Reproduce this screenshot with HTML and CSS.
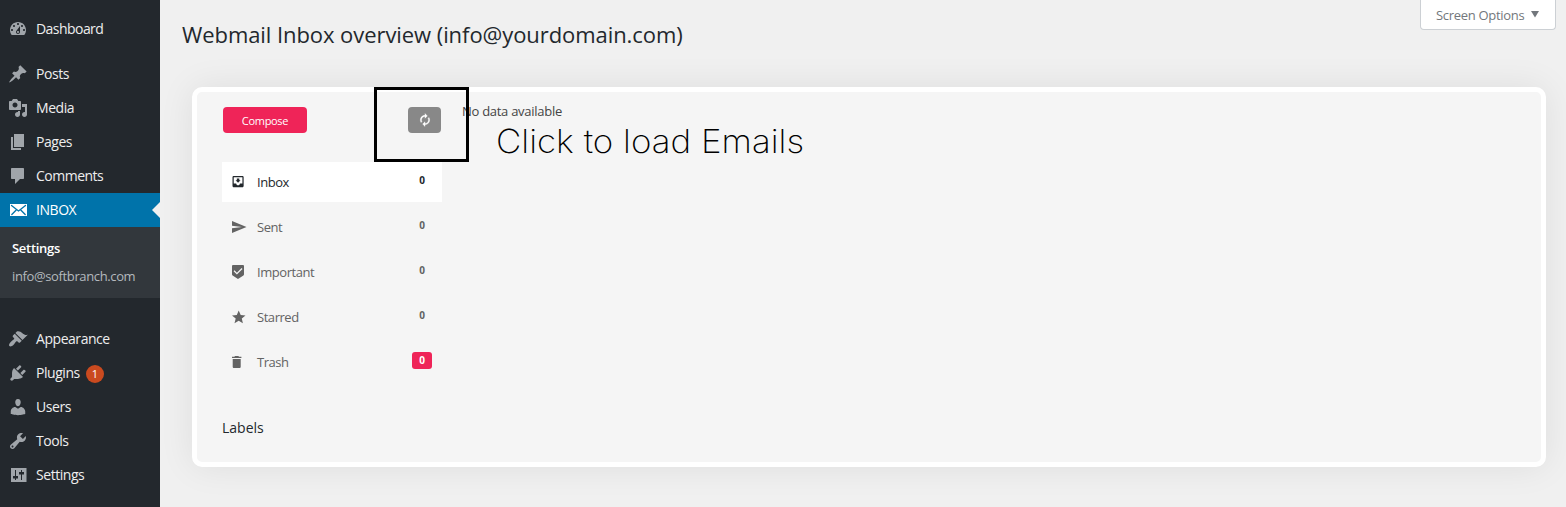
FILE: index.html
```html
<!DOCTYPE html>
<html lang="en">
<head>
<meta charset="utf-8">
<title>Webmail Inbox overview</title>
<link rel="stylesheet" href="styles.css">
</head>
<body>
<div class="layout">
  <nav class="sidebar">
    <a class="item first"><svg viewBox="0 0 20 20"><path d="M3.76 16h12.48c1.1-1.37 1.76-3.11 1.76-5 0-4.42-3.58-8-8-8s-8 3.58-8 8c0 1.89.66 3.63 1.76 5zM10 4c.55 0 1 .45 1 1s-.45 1-1 1-1-.45-1-1 .45-1 1-1zM6 6c.55 0 1 .45 1 1s-.45 1-1 1-1-.45-1-1 .45-1 1-1zm8 0c.55 0 1 .45 1 1s-.45 1-1 1-1-.45-1-1 .45-1 1-1zm-5.37 5.55L12 7v6c0 1.1-.9 2-2 2s-2-.9-2-2c0-.57.24-1.08.63-1.45zM4 10c.55 0 1 .45 1 1s-.45 1-1 1-1-.45-1-1 .45-1 1-1zm12 0c.55 0 1 .45 1 1s-.45 1-1 1-1-.45-1-1 .45-1 1-1zm-5 3c0-.55-.45-1-1-1s-1 .45-1 1 .45 1 1 1 1-.45 1-1z"/></svg><span>Dashboard</span></a>
    <a class="item"><svg viewBox="0 0 20 20"><path d="M10.44 3.02l1.82-1.82 6.36 6.35-1.83 1.82c-1.05-.68-2.48-.57-3.41.36l-.75.75c-.92.93-1.04 2.35-.35 3.41l-1.83 1.82-2.41-2.41-2.8 2.79c-.42.42-3.38 2.71-3.8 2.29s1.86-3.39 2.28-3.81l2.79-2.79L4.1 9.36l1.83-1.82c1.05.69 2.48.57 3.4-.36l.75-.75c.93-.92 1.05-2.35.36-3.41z"/></svg><span>Posts</span></a>
    <a class="item"><svg viewBox="0 0 20 20"><path d="M13 11V4c0-.55-.45-1-1-1h-1.67L9 1H5L3.67 3H2c-.55 0-1 .45-1 1v7c0 .55.45 1 1 1h10c.55 0 1-.45 1-1zM7 4.5c1.38 0 2.5 1.12 2.5 2.5S8.38 9.5 7 9.5 4.5 8.38 4.5 7 5.62 4.5 7 4.5zM14 6h5v10.5c0 1.38-1.12 2.5-2.5 2.5S14 17.88 14 16.5s1.12-2.5 2.5-2.5c.17 0 .34.02.5.05V9h-3V6zm-4 8.05V13h2v3.5c0 1.38-1.12 2.5-2.5 2.5S7 17.88 7 16.5 8.12 14 9.5 14c.17 0 .34.02.5.05z"/></svg><span>Media</span></a>
    <a class="item"><svg viewBox="0 0 20 20"><path d="M6 15V2h10v13H6zm-1 1h8v2H3V5h2v11z"/></svg><span>Pages</span></a>
    <a class="item comments"><svg viewBox="0 0 20 20"><path d="M4 2h11c.6 0 1 .4 1 1v9c0 .6-.4 1-1 1h-3l-5 5v-5H4c-.6 0-1-.4-1-1V3c0-.6.4-1 1-1z"/></svg><span>Comments</span></a>
    <a class="item current"><svg viewBox="0 0 20 20"><path d="M2 4h17v12H2z"/><path class="flap" d="M3.500 5.500l7 5.500 7-5.500M3.800 14.500l4.200-4.300M17.200 14.500L13 10.200"/></svg><span>INBOX</span></a>
    <div class="submenu"><a class="active">Settings</a><a class="account">info@softbranch.com</a></div>
    <a class="item"><svg viewBox="0 0 20 20"><path d="M14.480 11.060L7.410 3.990l1.500-1.500c.5-.56 2.300-.47 3.510.32 1.210.8 1.430 1.280 2.910 2.100 1.180.64 2.450 1.260 4.450.85zm-.71.71L6.700 4.700 4.930 6.470c-.39.39-.39 1.020 0 1.410l1.060 1.060c.39.39.39 1.030 0 1.420-.6.6-1.430 1.110-2.210 1.690-.35.26-.7.53-1.010.84C1.430 14.230.4 16.080 1.400 17.070c.99 1 2.840-.03 4.180-1.360.31-.31.58-.66.85-1.020.57-.78 1.080-1.610 1.690-2.210.39-.39 1.020-.39 1.410 0l1.060 1.060c.39.39 1.020.39 1.410 0z"/></svg><span>Appearance</span></a>
    <a class="item"><svg viewBox="0 0 20 20"><path d="M13.110 4.360L9.870 7.600 8 5.730l3.240-3.240c.35-.34 1.050-.2 1.560.32.52.51.66 1.210.31 1.550zm-8 1.770l.91-1.120 9.010 9.010-1.190.84c-.71.71-2.630 1.160-3.820 1.160H6.140L4.900 17.260c-.59.59-1.540.59-2.120 0-.59-.58-.59-1.530 0-2.120l1.240-1.240v-3.880c0-1.130.4-3.190 1.090-3.890zm7.260 3.970l3.240-3.240c.34-.35 1.040-.21 1.550.31.52.51.66 1.210.31 1.550l-3.240 3.250z"/></svg><span>Plugins</span><b class="updates">1</b></a>
    <a class="item"><svg viewBox="0 0 20 20"><path d="M10 9.250c-2.270 0-2.730-3.440-2.730-3.440C7 4.020 7.820 2 9.970 2c2.160 0 2.980 2.020 2.710 3.810 0 0-.41 3.440-2.680 3.440zm0 2.570L12.720 10c2.390 0 4.520 2.330 4.520 4.530v2.490s-3.650 1.130-7.240 1.130c-3.650 0-7.240-1.130-7.240-1.130v-2.490c0-2.250 1.940-4.480 4.470-4.480z"/></svg><span>Users</span></a>
    <a class="item"><svg viewBox="0 0 20 20"><path d="M16.680 9.770c-1.340 1.340-3.300 1.670-4.950.99l-5.410 6.520c-.99.99-2.590.99-3.580 0s-.99-2.590 0-3.570l6.520-5.420c-.68-1.650-.35-3.610.99-4.950 1.280-1.280 3.120-1.620 4.720-1.060l-2.890 2.890 2.820 2.820 2.860-2.870c.53 1.580.18 3.390-1.080 4.650zM3.810 16.210c.4.39 1.040.39 1.430 0 .4-.4.4-1.040 0-1.430-.39-.4-1.030-.4-1.430 0-.39.39-.39 1.030 0 1.430z"/></svg><span>Tools</span></a>
    <a class="item"><svg viewBox="0 0 20 20"><path fill-rule="evenodd" d="M3 3h15.500v14H3zM7 5v6H5v2.500h2V15h1v-1.500h2V11H8V5zM13 5v2h-2v2.500h2V15h1V9.500h2V7h-2V5z"/></svg><span>Settings</span></a>
  </nav>
  <main class="content">
    <header class="top">
      <h1>Webmail Inbox overview (info@yourdomain.com)</h1>
      <button class="screen-options"><span>Screen Options</span><svg width="8" height="7" viewBox="0 0 8 7"><path d="M0 0h8L4 6.500z"/></svg></button>
    </header>
    <section class="card">
      <aside class="mail">
        <div class="actions">
          <button class="compose">Compose</button>
          <button class="refresh"><svg viewBox="0 0 24 24"><path d="M12 6v3l4-4-4-4v3c-4.420 0-8 3.580-8 8 0 1.570.46 3.030 1.240 4.260L6.700 14.800c-.45-.83-.7-1.790-.7-2.800 0-3.310 2.690-6 6-6zm6.760 1.740L17.300 9.200c.44.84.7 1.790.7 2.800 0 3.310-2.690 6-6 6v-3l-4 4 4 4v-3c4.420 0 8-3.580 8-8 0-1.570-.46-3.030-1.240-4.260z"/></svg></button>
        </div>
        <a class="folder selected"><svg viewBox="3 3 21 21"><path d="M19 3H5c-1.100 0-2 .9-2 2v14c0 1.100.9 2 2 2h14c1.100 0 2-.9 2-2V5c0-1.100-.9-2-2-2zm0 12h-4c0 1.660-1.350 3-3 3s-3-1.340-3-3H5V5h14v10zm-3-5h-2V7h-4v3H8l4 4 4-4z"/></svg><span>Inbox</span><b>0</b></a>
        <a class="folder"><svg viewBox="0 0 14 14"><path d="M0 1l14.500 6L0 13V8.300L10 7 0 5.700z"/></svg><span>Sent</span><b>0</b></a>
        <a class="folder"><svg viewBox="0 0 14 14"><path fill-rule="evenodd" d="M1 0h10a1 1 0 0 1 1 1v8.300c0 .5-.2.8-.6 1.100L6 14 .6 10.400C.2 10.100 0 9.800 0 9.300V1a1 1 0 0 1 1-1zm3.900 9.500l5.600-5.600-.9-.9-4.700 4.700L2.500 5.300l-.9.9z"/></svg><span>Important</span><b>0</b></a>
        <a class="folder"><svg viewBox="0 0 14 14"><path d="M6.700.5l2 4.500 4.800.4-3.700 3.200 1.100 4.700-4.200-2.500-4.200 2.500 1.200-4.700L0 5.400 4.800 5z"/></svg><span>Starred</span><b>0</b></a>
        <a class="folder trash"><svg viewBox="0 0 14 14"><path d="M.7 4h8v7.700c0 .8-.5 1.300-1.300 1.300H2C1.200 13 .7 12.500.7 11.700zM0 1.700h2.400L3 1h3.400l.6.700h2.400V3H0z"/></svg><span>Trash</span><b>0</b></a>
        <h2>Labels</h2>
      </aside>
      <div class="messages">
        <p>No data available</p>
        <div class="callout">Click to load Emails</div>
      </div>
      <div class="highlight"></div>
    </section>
  </main>
</div>
</body>
</html>
```
FILE: styles.css
```css
* { box-sizing: border-box; }
body { margin: 0; background: #f0f0f0; font-family: "Open Sans", "Noto Sans", sans-serif; font-size: 13px; overflow: hidden; }
h1, h2, p { margin: 0; font-weight: 400; }
button { border: 0; padding: 0; font: inherit; }
.layout { display: flex; height: 507px; }

.sidebar { width: 160px; flex: none; padding-top: 12px; background: #23282d; color: #eee; font-size: 14px; }
.item { display: flex; align-items: center; height: 34px; padding-left: 8px; letter-spacing: -.45px; position: relative; }
.item span { padding-bottom: 2px; }
.item svg { width: 20px; height: 20px; fill: #a0a5aa; margin-right: 8px; flex: none; }
.item.first { margin-bottom: 11px; letter-spacing: -.55px; }
.item.comments { letter-spacing: -.5px; }
.current { background: #0073aa; color: #fff; }
.current svg { fill: #fff; }
.current .flap { fill: none; stroke: #0073aa; stroke-width: 1.3; stroke-linecap: round; }
.current::after { content: ""; position: absolute; right: 0; top: 9px; border: 8px solid transparent; border-left: 0; border-right-color: #f0f0f0; }
.submenu { display: flex; flex-direction: column; height: 71px; padding: 7px 12px; margin-bottom: 24px; background: #32373c; font-size: 13px; line-height: 28px; color: #b4b9be; letter-spacing: -.3px; }
.submenu .active { color: #fff; font-weight: 600; }
.submenu .account { letter-spacing: -.37px; }
.updates { width: 18px; height: 18px; margin: 2px 0 0 6px; border-radius: 50%; background: #ca4a1f; color: #fff; font-size: 11px; line-height: 18px; font-weight: 400; text-align: center; letter-spacing: 0; }

.content { flex: 1; padding: 0 20px 0 32px; }
.top { display: flex; justify-content: space-between; height: 87px; margin-left: -10px; margin-right: -10px; }
h1 { padding-top: 18px; font-size: 22px; line-height: 32px; color: #23282d; letter-spacing: -.07px; white-space: nowrap; }
.screen-options { display: flex; align-items: center; gap: 7px; width: 136px; height: 30px; padding-left: 15px; background: #fff; border: 1px solid #ccd0d4; border-top: 0; border-radius: 0 0 4px 4px; color: #72777c; letter-spacing: -.3px; white-space: nowrap; }
.screen-options svg { fill: #72777c; }

.card { position: relative; display: flex; height: 380px; border: 5px solid #fff; border-radius: 10px; background: #f5f5f5; box-shadow: 0 0 35px rgba(0, 0, 0, .08); }
.mail { width: 245px; padding: 15px 0 0 25px; }
.actions { display: flex; justify-content: space-between; height: 55px; padding: 0 1px; }
.actions button { height: 26px; border-radius: 4px; color: #fff; }
.compose { width: 84px; background: #ef2458; }
.actions .compose { font-size: 11px; letter-spacing: -.3px; }
.refresh { display: flex; align-items: center; justify-content: center; width: 33px; background: #888; }
.refresh svg { width: 14px; height: 14px; fill: #fff; stroke: #fff; stroke-width: .6; }
.folder { display: flex; align-items: center; height: 40px; margin-bottom: 5px; padding: 0 10px; color: #636363; letter-spacing: -.45px; }
.folder svg { width: 14px; height: 14px; margin-right: 11px; fill: currentColor; overflow: visible; }
.folder b { width: 20px; height: 17px; margin: 0 0 4px auto; border-radius: 3px; font-size: 10px; line-height: 17px; text-align: center; letter-spacing: 0; }
.selected { background: #fff; color: #23282d; }
.selected svg { padding-top: 1px; }
.trash b { background: #ef2458; color: #fff; }
h2 { margin-top: 36px; font-size: 14px; line-height: 20px; font-weight: 500; color: #23282d; letter-spacing: 0; }
.messages { padding: 9px 0 0 20px; color: #444; letter-spacing: -.28px; }
.messages p { line-height: 20px; }
.callout { width: max-content; margin-left: 34px; color: #000; font: 200 33px/40px Inter, sans-serif; letter-spacing: 0; white-space: nowrap; transform: scaleX(1.058); transform-origin: left; }
.highlight { position: absolute; left: 177px; top: -5px; width: 95px; height: 75px; border: 3px solid #000; }
```
